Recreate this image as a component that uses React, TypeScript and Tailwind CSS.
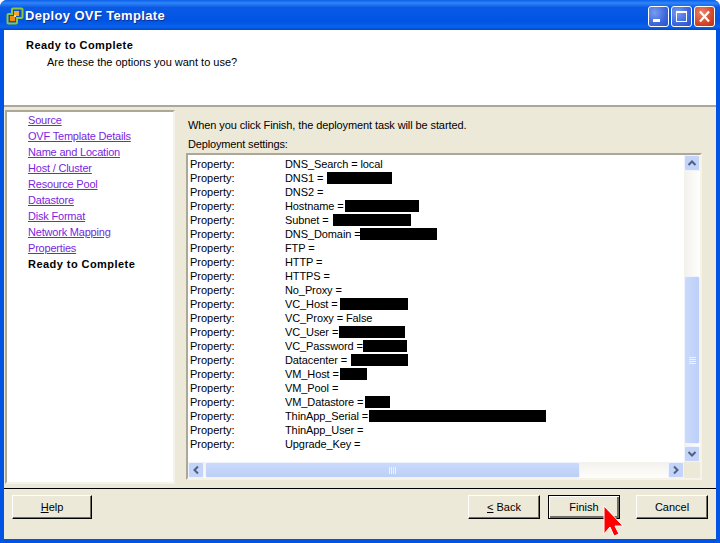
const navItems = [
  'Source',
  'OVF Template Details',
  'Name and Location',
  'Host / Cluster',
  'Resource Pool',
  'Datastore',
  'Disk Format',
  'Network Mapping',
  'Properties',
];

// mask classes are offsets from the left edge of the list
const rows: { text: string; mask?: string }[] = [
  { text: 'DNS_Search = local' },
  { text: 'DNS1 =', mask: 'left-[137px] w-[65px]' },
  { text: 'DNS2 =' },
  { text: 'Hostname =', mask: 'left-[155px] w-[74px]' },
  { text: 'Subnet =', mask: 'left-[143px] w-[78px]' },
  { text: 'DNS_Domain =', mask: 'left-[170px] w-[77px]' },
  { text: 'FTP =' },
  { text: 'HTTP =' },
  { text: 'HTTPS =' },
  { text: 'No_Proxy =' },
  { text: 'VC_Host =', mask: 'left-[150px] w-[68px]' },
  { text: 'VC_Proxy = False' },
  { text: 'VC_User =', mask: 'left-[149px] w-[66px]' },
  { text: 'VC_Password =', mask: 'left-[173px] w-[44px]' },
  { text: 'Datacenter =', mask: 'left-[161px] w-[57px]' },
  { text: 'VM_Host =', mask: 'left-[150px] w-[27px]' },
  { text: 'VM_Pool =' },
  { text: 'VM_Datastore =', mask: 'left-[175px] w-[25px]' },
  { text: 'ThinApp_Serial =', mask: 'left-[179px] w-[177px]' },
  { text: 'ThinApp_User =' },
  { text: 'Upgrade_Key =' },
];

function VmIcon() {
  return (
    <svg width="18" height="18" viewBox="0 0 18 18" className="shrink-0">
      <path d="M7 1.500h8.500a1 1 0 0 1 1 1V10a1 1 0 0 1-1 1H11v4.500a1 1 0 0 1-1 1H2.500a1 1 0 0 1-1-1V8a1 1 0 0 1 1-1H6V2.500a1 1 0 0 1 1-1z" fill="#0b4fd0" stroke="#8cc63f" strokeWidth="2" />
      <rect x="8" y="4" width="5" height="5" fill="#f5a623" />
      <rect x="4" y="9" width="5" height="5" fill="#f08a12" />
      <rect x="8" y="8" width="2" height="2" fill="#ffe08a" />
    </svg>
  );
}

function CaptionButton({ kind }: { kind: 'min' | 'max' | 'close' }) {
  return (
    <div
      className={
        kind === 'close'
          ? 'flex h-[21px] w-[21px] items-center justify-center rounded-[3px] border border-white bg-[radial-gradient(circle_at_35%_30%,#e8866a,#d4472a_60%,#b8300f)]'
          : 'flex h-[21px] w-[21px] items-center justify-center rounded-[3px] border border-white bg-[radial-gradient(circle_at_30%_30%,#7a9cf0,#3c66dc_60%,#2a4fc8)]'
      }
    >
      <svg width="19" height="19" viewBox="0 0 19 19">
        {kind === 'min' && <rect x="4" y="12" width="7" height="3" fill="#fff" />}
        {kind === 'max' && (
          <>
            <rect x="4.500" y="4.500" width="10" height="10" fill="none" stroke="#fff" />
            <rect x="4" y="4" width="11" height="2" fill="#fff" />
          </>
        )}
        {kind === 'close' && <path d="M5 4.500l9 10M14 4.500l-9 10" stroke="#fff" strokeWidth="2.200" />}
      </svg>
    </div>
  );
}

function WizardButton({ strong, wide, children }: { strong?: boolean; wide?: boolean; children: React.ReactNode }) {
  return (
    <div
      className={`flex h-6 ${wide ? 'w-20' : 'w-[72px]'} items-center justify-center border ${
        strong
          ? 'border-black shadow-[inset_1px_1px_0_#fff,inset_-2px_-2px_0_#716f64]'
          : 'border-t-white border-l-white border-r-black border-b-black shadow-[inset_-1px_-1px_0_#716f64]'
      } bg-[#ece9d8]`}
    >
      {children}
    </div>
  );
}

function ScrollArrow({ d }: { d: string }) {
  return (
    <div className="flex h-4 w-4 shrink-0 items-center justify-center rounded-[2px] border border-[#eef3ff] bg-[#c3d4f8]">
      <svg width="10" height="10" viewBox="0 0 10 10">
        <path d={d} fill="none" stroke="#4d6185" strokeWidth="2" />
      </svg>
    </div>
  );
}

function Grip({ vertical }: { vertical?: boolean }) {
  const bars = [0, 1, 2, 3];
  return (
    <div className={vertical ? 'flex flex-col gap-px' : 'flex gap-px'}>
      {bars.map((b) => (
        <div key={b} className={vertical ? 'h-px w-[7px] bg-[#eef3ff]' : 'h-[7px] w-px bg-[#eef3ff]'} />
      ))}
    </div>
  );
}

export default function App() {
  return (
    <div className="relative flex h-[543px] w-[720px] flex-col overflow-hidden rounded-t-[7px] bg-[#0054e3] font-['Liberation_Sans',sans-serif] text-[11px] leading-[14px] text-black">
      {/* title bar */}
      <div className="flex h-[30px] shrink-0 items-center bg-[linear-gradient(180deg,#0a5fe8_0%,#2f86f8_10%,#0a5ae4_25%,#0054e3_70%,#0a62ee_90%,#0048c8_100%)] pl-[6px] pr-[5px] pt-[2px]">
        <VmIcon />
        <span className="flex-1 pl-[1px] text-[13px] font-bold tracking-[0.35px] text-white [text-shadow:1px_1px_0_#0f2f8c]">
          Deploy OVF Template
        </span>
        <div className="flex gap-[2px]">
          <CaptionButton kind="min" />
          <CaptionButton kind="max" />
          <CaptionButton kind="close" />
        </div>
      </div>

      {/* window body */}
      <div className="mb-1 ml-1 mr-1 flex min-h-0 flex-1 flex-col bg-[#ece9d8]">
        <div className="h-[77px] shrink-0 border-b-2 border-[#aca899] bg-white pl-[22px] pt-2">
          <div className="font-bold tracking-[0.45px]">Ready to Complete</div>
          <div className="mt-[3px] pl-[21px]">Are these the options you want to use?</div>
        </div>

        <div className="flex h-[381px] shrink-0 pl-px pt-[3px]">
          <div className="h-[374px] w-[170px] shrink-0 border-2 border-t-[#aca899] border-l-[#aca899] border-r-[#f5f3ea] border-b-[#f5f3ea] bg-white pl-[21px] tracking-[-0.2px]">
            {navItems.map((item) => (
              <div key={item} className="h-4 leading-4 text-[#7b1fe0] underline">
                {item}
              </div>
            ))}
            <div className="h-4 font-bold leading-4 tracking-[0.45px]">Ready to Complete</div>
          </div>

          <div className="ml-[11px] flex w-[516px] flex-col">
            <div className="pl-[2px] pt-2 tracking-[-0.1px]">When you click Finish, the deployment task will be started.</div>
            <div className="pl-[2px] pt-[5px] tracking-[-0.15px]">Deployment settings:</div>
            <div className="mt-[2px] flex h-[327px] w-[516px] flex-col border-2 border-t-[#aca899] border-l-[#aca899] border-r-[#f5f3ea] border-b-[#f5f3ea] bg-white">
              <div className="flex min-h-0 flex-1">
                <div className="flex-1 pl-[2px] pt-[2px]">
                  {rows.map((row) => (
                    <div key={row.text} className="relative flex h-[14px]">
                      <span className="w-[95px] shrink-0">Property:</span>
                      <span className="tracking-[-0.1px]">{row.text}</span>
                      {row.mask && <div className={`absolute top-px h-[12px] bg-black ${row.mask}`} />}
                    </div>
                  ))}
                </div>
                <div className="flex h-full w-[16px] shrink-0 flex-col bg-[linear-gradient(90deg,#f3f1ec,#fefefb)]">
                  <ScrollArrow d="M1.500 7l3.500-3.500L8.500 7" />
                  <div className="mt-[105px] flex h-[168px] w-full items-center justify-center rounded-[2px] border border-[#eef3ff] bg-[linear-gradient(90deg,#cbdafb,#bccff8)]">
                    <Grip vertical />
                  </div>
                  <div className="flex-1" />
                  <ScrollArrow d="M1.500 3l3.500 3.500L8.500 3" />
                </div>
              </div>
              <div className="flex h-[16px] shrink-0 bg-[linear-gradient(180deg,#f3f1ec,#fefefb)]">
                <ScrollArrow d="M7 1.500L3.500 5 7 8.500" />
                <div className="ml-[1px] flex h-full w-[375px] items-center justify-center rounded-[2px] border border-[#eef3ff] bg-[linear-gradient(180deg,#cbdafb,#bccff8)]">
                  <Grip />
                </div>
                <div className="flex-1" />
                <ScrollArrow d="M3 1.500L6.500 5 3 8.500" />
                <div className="w-[16px] shrink-0 bg-[#ece9d8]" />
              </div>
            </div>
          </div>
        </div>

        {/* footer */}
        <div className="flex flex-1 items-start justify-between border-t border-black px-2 pt-[6px]">
          <WizardButton wide>
            <span>
              <u>H</u>elp
            </span>
          </WizardButton>
          <div className="flex gap-2">
            <WizardButton>
              <span>
                <u>&lt;</u> Back
              </span>
            </WizardButton>
            <WizardButton strong>
              <span>Finish</span>
            </WizardButton>
            <div className="ml-2">
              <WizardButton>
                <span>Cancel</span>
              </WizardButton>
            </div>
          </div>
        </div>
      </div>

      {/* mouse pointer in the screenshot */}
      <svg width="24" height="34" viewBox="0 0 24 34" className="absolute left-[601px] top-[504px]">
        <path d="M3 2v28l6-7 4 9 5-2-4-8h8z" fill="#ff0000" stroke="#fff" strokeWidth="1" />
      </svg>
    </div>
  );
}
